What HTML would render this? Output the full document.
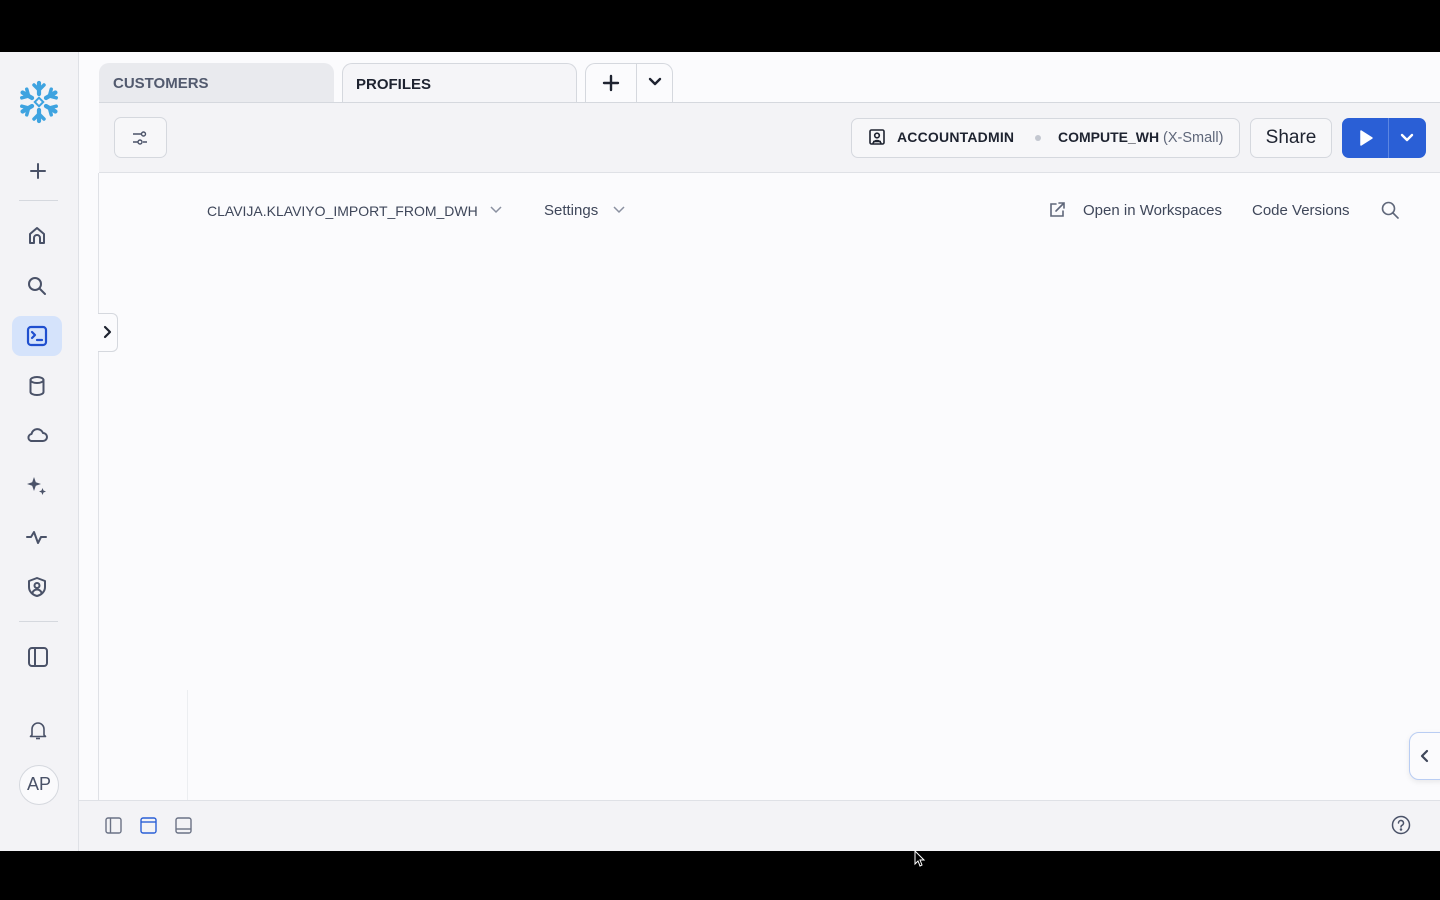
<!DOCTYPE html>
<html><head><meta charset="utf-8"><style>
*{box-sizing:border-box;margin:0;padding:0}
body{width:1440px;height:900px;background:#000;font-family:"Liberation Sans",sans-serif;position:relative;overflow:hidden;color:#1e2330}
.abs{position:absolute}
svg{display:block}
.ic{stroke:#4a5268;fill:none;stroke-width:2;stroke-linecap:round;stroke-linejoin:round}
</style></head><body>
<div class="abs" style="left:0;top:52px;width:1440px;height:799px;background:#fbfbfd"></div>
<!-- sidebar -->
<div class="abs" style="left:0;top:52px;width:79px;height:799px;background:#f3f3f6;border-right:1px solid #dfe1e6"></div>
<svg class="abs" style="left:17px;top:80px" width="44" height="44" viewBox="-22 -22 44 44">
<g stroke="#3ea3e0" stroke-width="4.2" stroke-linecap="round" fill="none">
<g id="arm"><line x1="0" y1="-8" x2="0" y2="-19"/><polyline points="-5,-17 0,-12 5,-17" stroke-width="3.5"/></g>
<use href="#arm" transform="rotate(60)"/><use href="#arm" transform="rotate(120)"/><use href="#arm" transform="rotate(180)"/><use href="#arm" transform="rotate(240)"/><use href="#arm" transform="rotate(300)"/>
</g>
<rect x="-3" y="-3" width="6" height="6" transform="rotate(45)" fill="none" stroke="#3ea3e0" stroke-width="2"/>
</svg>
<svg class="abs ic" style="left:28px;top:161px" width="20" height="20" viewBox="0 0 20 20"><path d="M10 3v14M3 10h14"/></svg>
<div class="abs" style="left:19px;top:200px;width:39px;height:1px;background:#d5d8de"></div>
<svg class="abs ic" style="left:26px;top:225px" width="22" height="22" viewBox="0 0 22 22"><path d="M4 18V9l7-6 7 6v9h-4v-5a3 3 0 0 0-6 0v5z"/></svg>
<svg class="abs ic" style="left:26px;top:275px" width="22" height="22" viewBox="0 0 22 22"><circle cx="9" cy="9" r="6"/><path d="M13.5 13.5L19 19"/></svg>
<div class="abs" style="left:12px;top:316px;width:50px;height:40px;border-radius:9px;background:#d5e3fb"></div>
<svg class="abs" style="left:26px;top:325px" width="22" height="22" viewBox="0 0 22 22" fill="none" stroke="#1f4fcf" stroke-width="2.2" stroke-linecap="round" stroke-linejoin="round"><rect x="2" y="2" width="18" height="18" rx="3"/><path d="M6 7l3 3-3 3M11 15h5"/></svg>
<svg class="abs ic" style="left:26px;top:375px" width="22" height="22" viewBox="0 0 22 22"><ellipse cx="11" cy="5" rx="6.5" ry="3"/><path d="M4.5 5v12c0 1.7 2.9 3 6.5 3s6.5-1.3 6.5-3V5"/></svg>
<svg class="abs ic" style="left:25px;top:425px" width="24" height="20" viewBox="0 0 24 20"><path d="M6 16h12a4 4 0 0 0 0-8 6 6 0 0 0-11.5 1A3.6 3.6 0 0 0 6 16z"/></svg>
<svg class="abs" style="left:26px;top:476px" width="22" height="22" viewBox="0 0 22 22" fill="#4a5268"><path d="M8 1l1.8 5.2L15 8l-5.2 1.8L8 15l-1.8-5.2L1 8l5.2-1.8z"/><path d="M16.5 12l1 2.5 2.5 1-2.5 1-1 2.5-1-2.5-2.5-1 2.5-1z"/></svg>
<svg class="abs ic" style="left:26px;top:526px" width="22" height="22" viewBox="0 0 22 22"><path d="M1 11h4l3-5 4 11 3-6h5"/></svg>
<svg class="abs ic" style="left:26px;top:576px" width="22" height="22" viewBox="0 0 22 22"><path d="M11 2l8 3v6c0 5-4 8-8 9-4-1-8-4-8-9V5z"/><circle cx="11" cy="9.5" r="2.5"/><path d="M6.5 16.5c1-2 2.5-3 4.5-3s3.5 1 4.5 3"/></svg>
<div class="abs" style="left:19px;top:621px;width:39px;height:1px;background:#d5d8de"></div>
<svg class="abs ic" style="left:27px;top:646px" width="22" height="22" viewBox="0 0 22 22"><rect x="2" y="2" width="18" height="18" rx="3"/><path d="M8 2v18"/></svg>
<svg class="abs" style="left:29px;top:721px" width="18" height="19" viewBox="0 0 18 19" fill="none" stroke="#4a5268" stroke-width="1.6" stroke-linejoin="round"><path d="M3 14V8a6 6 0 0 1 12 0v6l1.5 1.5h-15z"/><path d="M7 17.5h4"/></svg>
<div class="abs" style="left:19px;top:765px;width:40px;height:40px;border-radius:50%;border:1.5px solid #d5d8de;background:#fafafc;font-size:18px;color:#4a5268;text-align:center;line-height:37px">AP</div>
<!-- tabs -->
<div class="abs" style="left:99px;top:63px;width:235px;height:40px;background:#e9eaee;border-radius:10px 10px 0 0;font-size:15px;font-weight:bold;color:#525a6e;padding:12px 0 0 14px">CUSTOMERS</div>
<div class="abs" style="left:342px;top:63px;width:235px;height:40px;background:#f5f5f8;border:1px solid #d5d8de;border-bottom:none;border-radius:10px 10px 0 0;font-size:15px;font-weight:bold;color:#1e2330;padding:12px 0 0 13px">PROFILES</div>
<div class="abs" style="left:585px;top:63px;width:88px;height:40px;border:1px solid #d5d8de;border-bottom:none;border-radius:10px 10px 0 0;background:#fbfbfd"></div>
<div class="abs" style="left:636px;top:64px;width:1px;height:38px;background:#d5d8de"></div>
<svg class="abs" style="left:601px;top:73px" width="20" height="20" viewBox="0 0 20 20" stroke="#1e2330" stroke-width="2.4" stroke-linecap="round"><path d="M10 3v14M3 10h14"/></svg>
<svg class="abs" style="left:647px;top:76px" width="16" height="12" viewBox="0 0 16 12" fill="none" stroke="#1e2330" stroke-width="2.4" stroke-linecap="round" stroke-linejoin="round"><path d="M3 3l5 5 5-5"/></svg>
<!-- toolbar -->
<div class="abs" style="left:99px;top:102px;width:1341px;height:71px;background:#f3f3f6;border-top:1px solid #d5d8de;border-bottom:1px solid #dfe1e6"></div>
<div class="abs" style="left:114px;top:117px;width:53px;height:41px;border:1px solid #d5d8de;border-radius:7px;background:#f7f7f9"></div>
<svg class="abs" style="left:130px;top:128px" width="20" height="20" viewBox="0 0 20 20" fill="none" stroke="#4a5268" stroke-width="1.4"><path d="M3 6h8M3 14h5M13 14h4"/><circle cx="13.5" cy="6" r="2"/><circle cx="10" cy="14" r="2"/></svg>
<div class="abs" style="left:851px;top:118px;width:389px;height:40px;border:1px solid #d5d8de;border-radius:7px;background:#f7f7f9"></div>
<svg class="abs" style="left:868px;top:128px" width="18" height="18" viewBox="0 0 18 18" fill="none" stroke="#1e2330" stroke-width="1.6"><rect x="2" y="2" width="14" height="14" rx="1.5"/><circle cx="9" cy="7.5" r="2.3"/><path d="M5 13.5h8M5 16c0-2 2-3.5 4-3.5s4 1.5 4 3.5"/></svg>
<div class="abs" style="left:897px;top:129px;font-size:14px;font-weight:bold;color:#1e2330;letter-spacing:.2px">ACCOUNTADMIN</div>
<div class="abs" style="left:1035px;top:135px;width:6px;height:6px;border-radius:50%;background:#c3c7d0"></div>
<div class="abs" style="left:1058px;top:129px;font-size:14px;font-weight:bold;color:#1e2330">COMPUTE_WH <span style="color:#5f677a;font-weight:normal;font-size:14.5px">(X-Small)</span></div>
<div class="abs" style="left:1250px;top:118px;width:82px;height:40px;border:1px solid #d5d8de;border-radius:7px;background:#f7f7f9;font-size:19px;color:#1e2330;text-align:center;line-height:38px">Share</div>
<div class="abs" style="left:1342px;top:118px;width:84px;height:40px;border-radius:7px;background:#2a5fd6"></div>
<div class="abs" style="left:1388px;top:118px;width:1px;height:40px;background:#5c86e2"></div>
<svg class="abs" style="left:1357px;top:128px" width="18" height="20" viewBox="0 0 18 20"><path d="M4 3l11 7-11 7z" fill="#fff" stroke="#fff" stroke-width="1.5" stroke-linejoin="round"/></svg>
<svg class="abs" style="left:1399px;top:132px" width="16" height="12" viewBox="0 0 16 12" fill="none" stroke="#fff" stroke-width="2.4" stroke-linecap="round" stroke-linejoin="round"><path d="M3 3l5 5 5-5"/></svg>
<!-- content -->
<div class="abs" style="left:98px;top:173px;width:1px;height:628px;background:#dfe1e6"></div>
<div class="abs" style="left:187px;top:690px;width:1px;height:111px;background:#eceef1"></div>
<div class="abs" style="left:207px;top:203px;font-size:14px;color:#3f475a">CLAVIJA.KLAVIYO_IMPORT_FROM_DWH</div>
<svg class="abs" style="left:489px;top:204px" width="14" height="12" viewBox="0 0 14 12" fill="none" stroke="#8a90a0" stroke-width="1.5"><path d="M2 3l5 5 5-5"/></svg>
<div class="abs" style="left:544px;top:202px;font-size:15px;color:#3f475a">Settings</div>
<svg class="abs" style="left:612px;top:204px" width="14" height="12" viewBox="0 0 14 12" fill="none" stroke="#8a90a0" stroke-width="1.5"><path d="M2 3l5 5 5-5"/></svg>
<svg class="abs" style="left:1048px;top:201px" width="18" height="18" viewBox="0 0 18 18" fill="none" stroke="#5f677a" stroke-width="1.6" stroke-linecap="round"><path d="M8 3H3v12h12v-5M11 2h5v5M16 2L8 10"/></svg>
<div class="abs" style="left:1083px;top:202px;font-size:15px;color:#3f475a">Open in Workspaces</div>
<div class="abs" style="left:1252px;top:202px;font-size:15px;color:#3f475a">Code Versions</div>
<svg class="abs" style="left:1380px;top:200px" width="20" height="20" viewBox="0 0 20 20" fill="none" stroke="#5f677a" stroke-width="1.6" stroke-linecap="round"><circle cx="8.5" cy="8.5" r="6"/><path d="M13 13l5 5"/></svg>
<div class="abs" style="left:98px;top:313px;width:20px;height:39px;background:#fbfbfd;border:1px solid #d5d8de;border-left:none;border-radius:0 6px 6px 0"></div>
<svg class="abs" style="left:101px;top:325px" width="12" height="14" viewBox="0 0 12 14" fill="none" stroke="#1e2330" stroke-width="2.2" stroke-linecap="round" stroke-linejoin="round"><path d="M4 2l5 5-5 5"/></svg>
<div class="abs" style="left:1409px;top:732px;width:40px;height:48px;background:#fbfbfd;border:1px solid #b9cdf3;border-radius:10px;box-shadow:0 2px 6px rgba(0,0,0,.08)"></div>
<svg class="abs" style="left:1419px;top:749px" width="12" height="14" viewBox="0 0 12 14" fill="none" stroke="#3f475a" stroke-width="2.2" stroke-linecap="round" stroke-linejoin="round"><path d="M8 2L3 7l5 5"/></svg>
<!-- footer -->
<div class="abs" style="left:79px;top:800px;width:1361px;height:51px;background:#f3f3f6;border-top:1px solid #dfe1e6"></div>
<svg class="abs" style="left:105px;top:817px" width="17" height="17" viewBox="0 0 17 17" fill="none" stroke="#6b7285" stroke-width="1.4"><rect x="1" y="1" width="15" height="15" rx="2"/><path d="M5.5 1v15"/></svg>
<svg class="abs" style="left:140px;top:817px" width="17" height="17" viewBox="0 0 17 17" fill="none" stroke="#2a5fd6" stroke-width="1.4"><rect x="1" y="1" width="15" height="15" rx="2"/><path d="M1 5h15"/></svg>
<svg class="abs" style="left:175px;top:817px" width="17" height="17" viewBox="0 0 17 17" fill="none" stroke="#6b7285" stroke-width="1.4"><rect x="1" y="1" width="15" height="15" rx="2"/><path d="M1 12h15"/></svg>
<svg class="abs" style="left:1391px;top:815px" width="20" height="20" viewBox="0 0 20 20" fill="none" stroke="#4a5268" stroke-width="1.5" stroke-linecap="round"><circle cx="10" cy="10" r="8.5"/><path d="M7.5 8a2.5 2.5 0 1 1 3.5 2.3c-.7.3-1 .9-1 1.7"/><circle cx="10" cy="14.5" r=".5" fill="#4a5268"/></svg>
<svg class="abs" style="left:913px;top:850px" width="14" height="18" viewBox="0 0 14 18"><path d="M2 1v13l3-3 2 5 2-1-2-5h4z" fill="#000" stroke="#fff" stroke-width="1"/></svg>
</body></html>
